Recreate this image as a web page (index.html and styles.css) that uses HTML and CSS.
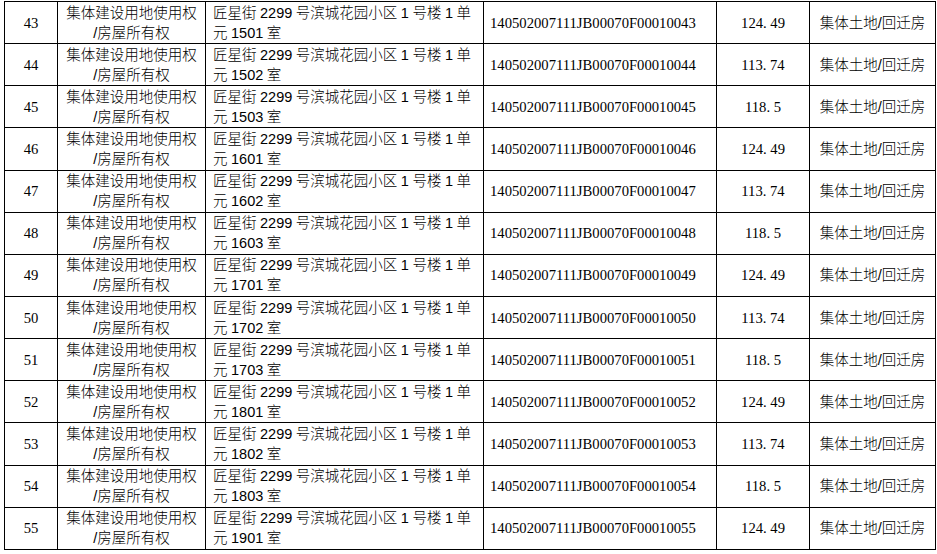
FILE: index.html
```html
<!DOCTYPE html>
<html lang="zh-CN">
<head>
<meta charset="utf-8">
<link rel="stylesheet" href="styles.css">
<title>表格</title>
</head>
<body>
<table class="tbl">
<colgroup>
<col class="c1"><col class="c2"><col class="c3"><col class="c4"><col class="c5"><col class="c6">
</colgroup>
<tbody>
<tr><td class="num">43</td><td class="type">集体建设用地使用权<br>/房屋所有权</td><td class="addr">匠星街 2299 号滨城花园小区 1 号楼 1 单<br>元 1501 室</td><td class="id">140502007111JB00070F00010043</td><td class="num">124<span class="dot">.</span>49</td><td class="use">集体土地/回迁房</td></tr>
<tr><td class="num">44</td><td class="type">集体建设用地使用权<br>/房屋所有权</td><td class="addr">匠星街 2299 号滨城花园小区 1 号楼 1 单<br>元 1502 室</td><td class="id">140502007111JB00070F00010044</td><td class="num">113<span class="dot">.</span>74</td><td class="use">集体土地/回迁房</td></tr>
<tr><td class="num">45</td><td class="type">集体建设用地使用权<br>/房屋所有权</td><td class="addr">匠星街 2299 号滨城花园小区 1 号楼 1 单<br>元 1503 室</td><td class="id">140502007111JB00070F00010045</td><td class="num">118<span class="dot">.</span>5</td><td class="use">集体土地/回迁房</td></tr>
<tr><td class="num">46</td><td class="type">集体建设用地使用权<br>/房屋所有权</td><td class="addr">匠星街 2299 号滨城花园小区 1 号楼 1 单<br>元 1601 室</td><td class="id">140502007111JB00070F00010046</td><td class="num">124<span class="dot">.</span>49</td><td class="use">集体土地/回迁房</td></tr>
<tr><td class="num">47</td><td class="type">集体建设用地使用权<br>/房屋所有权</td><td class="addr">匠星街 2299 号滨城花园小区 1 号楼 1 单<br>元 1602 室</td><td class="id">140502007111JB00070F00010047</td><td class="num">113<span class="dot">.</span>74</td><td class="use">集体土地/回迁房</td></tr>
<tr><td class="num">48</td><td class="type">集体建设用地使用权<br>/房屋所有权</td><td class="addr">匠星街 2299 号滨城花园小区 1 号楼 1 单<br>元 1603 室</td><td class="id">140502007111JB00070F00010048</td><td class="num">118<span class="dot">.</span>5</td><td class="use">集体土地/回迁房</td></tr>
<tr><td class="num">49</td><td class="type">集体建设用地使用权<br>/房屋所有权</td><td class="addr">匠星街 2299 号滨城花园小区 1 号楼 1 单<br>元 1701 室</td><td class="id">140502007111JB00070F00010049</td><td class="num">124<span class="dot">.</span>49</td><td class="use">集体土地/回迁房</td></tr>
<tr><td class="num">50</td><td class="type">集体建设用地使用权<br>/房屋所有权</td><td class="addr">匠星街 2299 号滨城花园小区 1 号楼 1 单<br>元 1702 室</td><td class="id">140502007111JB00070F00010050</td><td class="num">113<span class="dot">.</span>74</td><td class="use">集体土地/回迁房</td></tr>
<tr><td class="num">51</td><td class="type">集体建设用地使用权<br>/房屋所有权</td><td class="addr">匠星街 2299 号滨城花园小区 1 号楼 1 单<br>元 1703 室</td><td class="id">140502007111JB00070F00010051</td><td class="num">118<span class="dot">.</span>5</td><td class="use">集体土地/回迁房</td></tr>
<tr><td class="num">52</td><td class="type">集体建设用地使用权<br>/房屋所有权</td><td class="addr">匠星街 2299 号滨城花园小区 1 号楼 1 单<br>元 1801 室</td><td class="id">140502007111JB00070F00010052</td><td class="num">124<span class="dot">.</span>49</td><td class="use">集体土地/回迁房</td></tr>
<tr><td class="num">53</td><td class="type">集体建设用地使用权<br>/房屋所有权</td><td class="addr">匠星街 2299 号滨城花园小区 1 号楼 1 单<br>元 1802 室</td><td class="id">140502007111JB00070F00010053</td><td class="num">113<span class="dot">.</span>74</td><td class="use">集体土地/回迁房</td></tr>
<tr><td class="num">54</td><td class="type">集体建设用地使用权<br>/房屋所有权</td><td class="addr">匠星街 2299 号滨城花园小区 1 号楼 1 单<br>元 1803 室</td><td class="id">140502007111JB00070F00010054</td><td class="num">118<span class="dot">.</span>5</td><td class="use">集体土地/回迁房</td></tr>
<tr><td class="num">55</td><td class="type">集体建设用地使用权<br>/房屋所有权</td><td class="addr">匠星街 2299 号滨城花园小区 1 号楼 1 单<br>元 1901 室</td><td class="id">140502007111JB00070F00010055</td><td class="num">124<span class="dot">.</span>49</td><td class="use">集体土地/回迁房</td></tr>
</tbody>
</table>
</body>
</html>
```
FILE: styles.css
```css
html, body {
  margin: 0;
  padding: 0;
  background: #ffffff;
}

.tbl {
  border-collapse: collapse;
  table-layout: fixed;
  width: 931px;
  margin: 1px 0 0 4px;
  font-family: "Liberation Sans", "Noto Sans CJK SC", sans-serif;
  font-size: 14.5px;
  color: #000000;
}

.c1 { width: 53px; }
.c2 { width: 148px; }
.c3 { width: 278px; }
.c4 { width: 233px; }
.c5 { width: 93px; }
.c6 { width: 126px; }

.tbl td {
  border: 1px solid #000000;
  padding: 0;
  height: 41.15px;
  line-height: 20px;
  vertical-align: middle;
  white-space: nowrap;
  overflow: hidden;
}

.num {
  text-align: center;
  font-family: "Liberation Serif", serif;
  font-size: 14.67px;
}

.dot {
  letter-spacing: 3.6px;
}

.type {
  text-align: center;
  font-weight: 300;
}

.addr {
  text-align: left;
  padding-left: 7px !important;
  font-weight: 300;
  word-spacing: -0.5px;
}

.id {
  text-align: left;
  padding-left: 6px !important;
  font-family: "Liberation Serif", serif;
  font-size: 14.67px;
}

.use {
  text-align: center;
  font-weight: 300;
}
```
